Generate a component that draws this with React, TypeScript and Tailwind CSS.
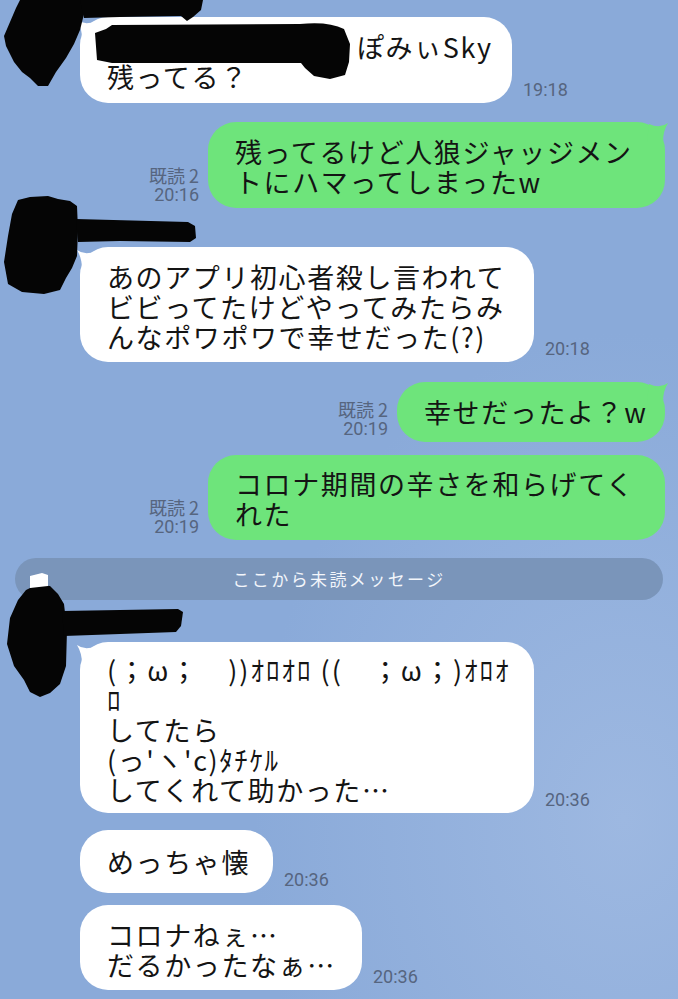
import React from "react";

const TEXT = "text-[27px] tracking-[1.6px] text-[#141414] whitespace-nowrap";
const TIME = "font-['Roboto',sans-serif] text-[18px] leading-[20px] text-[#56657f] pb-[3px]";

function Tail({ side, color }: { side: "left" | "right"; color: string }) {
  if (side === "left") {
    return (
      <svg className="absolute left-[-4px] top-0" width="24" height="24" viewBox="0 0 24 24">
        <path d="M1 3 Q9 9 20 4 L22 22 L6 22 Q6 11 1 3 Z" fill={color} />
      </svg>
    );
  }
  return (
    <svg className="absolute right-[-4px] top-[-2px]" width="24" height="24" viewBox="0 0 24 24">
      <path d="M23 3 Q15 9 4 4 L2 22 L18 22 Q18 11 23 3 Z" fill={color} />
    </svg>
  );
}

function Left({
  box,
  time,
  tail,
  children,
}: {
  box: string;
  time: string;
  tail?: boolean;
  children: React.ReactNode;
}) {
  return (
    <div className="flex items-end gap-[11px] pl-[80px]">
      <div className={"relative rounded-[28px] bg-white pl-[27px] " + box}>
        {tail && <Tail side="left" color="#ffffff" />}
        <div className={"relative " + TEXT}>{children}</div>
      </div>
      <span className={TIME}>{time}</span>
    </div>
  );
}

function Right({
  box,
  time,
  tail,
  children,
}: {
  box: string;
  time: string;
  tail?: boolean;
  children: React.ReactNode;
}) {
  return (
    <div className="flex items-end justify-end gap-[9px] pr-[13px]">
      <div className="flex flex-col items-end pb-[3px] leading-[20px] text-[#56657f]">
        <span className="text-[18px] whitespace-pre">既読 2</span>
        <span className="font-['Roboto',sans-serif] text-[18px]">{time}</span>
      </div>
      <div className={"relative rounded-[28px] bg-[#6ee47b] pl-[27px] " + box}>
        {tail && <Tail side="right" color="#6ee47b" />}
        <div className={"relative " + TEXT}>{children}</div>
      </div>
    </div>
  );
}

export default function App() {
  return (
    <div className="relative h-[999px] w-[678px] overflow-hidden bg-[#8aaad9] bg-[radial-gradient(ellipse_at_92%_82%,#9db8e1_0%,#8aaad9_42%)] font-['Noto_Sans_CJK_JP',sans-serif]">
      <div className="flex flex-col pt-[17px]">
        {/* first message, name redacted */}
        <Left box="w-[432px] pt-[15px] pb-[11px] leading-[30px]" time="19:18" tail>
          <div>
            <span className="inline-block w-[250px]" />
            ぽみぃSky
          </div>
          <div>残ってる？</div>
        </Left>

        <div className="mt-[19px]">
          <Right box="w-[457px] pt-[15px] pb-[11px] leading-[30px]" time="20:16" tail>
            <div>残ってるけど人狼ジャッジメン</div>
            <div>トにハマってしまったw</div>
          </Right>
        </div>

        <div className="mt-[39px]">
          <Left box="w-[454px] pt-[15px] pb-[10px] leading-[30px]" time="20:18" tail>
            <div>あのアプリ初心者殺し言われて</div>
            <div>ビビってたけどやってみたらみ</div>
            <div>んなポワポワで幸せだった(?)</div>
          </Left>
        </div>

        <div className="mt-[20px]">
          <Right box="w-[268px] py-[15px] leading-[30px]" time="20:19" tail>
            <div>幸せだったよ？w</div>
          </Right>
        </div>

        <div className="mt-[13px]">
          <Right box="w-[457px] pt-[14px] pb-[11px] leading-[30px]" time="20:19">
            <div>コロナ期間の辛さを和らげてく</div>
            <div>れた</div>
          </Right>
        </div>

        {/* unread divider */}
        <div className="mx-[15px] mt-[18px] flex h-[42px] items-center justify-center rounded-full bg-[#7a95ba]">
          <span className="text-[17px] tracking-[2.4px] text-[#f3f6fb]">ここから未読メッセージ</span>
        </div>

        <div className="mt-[42px]">
          <Left box="w-[454px] pt-[13px] pb-[8px] leading-[30px]" time="20:36" tail>
            <div className="tracking-[2px]">(；ω；　))ｵﾛｵﾛ ((　；ω；)ｵﾛｵ</div>
            <div>ﾛ</div>
            <div>してたら</div>
            <div>(っ'ヽ'c)ﾀﾁｹﾙ</div>
            <div>してくれて助かった…</div>
          </Left>
        </div>

        <div className="mt-[17px]">
          <Left box="w-[193px] py-[16px] leading-[31px]" time="20:36">
            <div>めっちゃ懐</div>
          </Left>
        </div>

        <div className="mt-[12px]">
          <Left box="w-[282px] pt-[15px] pb-[10px] leading-[30px]" time="20:36">
            <div>コロナねぇ…</div>
            <div>だるかったなぁ…</div>
          </Left>
        </div>
      </div>

      {/* redaction scribbles over avatars and names */}
      <svg className="pointer-events-none absolute inset-0" width="678" height="999" viewBox="0 0 678 999">
        <g fill="#050505">
          <path d="M20 0 L86 0 L84 14 L80 30 L74 44 L66 58 L56 72 L48 86 L38 86 L30 78 L22 72 L14 62 L6 46 L4 36 L10 22 L16 8 Z" />
          <path d="M80 0 L203 0 L201 10 L193 17 L187 21 L181 16 L120 17 L84 18 Z" />
          <path d="M95 33 L106 29 L112 25 L300 24 Q328 21 344 29 L350 44 L349 62 L345 75 L330 79 L314 76 L305 68 L301 63 L112 63 L97 60 Z" />
          <path d="M18 200 L30 197 L48 196 L58 199 L70 201 L77 206 L78 230 L77 256 L72 268 L66 278 L60 290 L44 294 L22 292 L8 284 L4 262 L8 236 L12 214 Z" />
          <path d="M76 219 L188 222 L195 226 L196 238 L190 242 L120 241 L78 242 Z" />
          <path d="M26 590 L36 585 L50 586 L58 594 L64 604 L67 630 L66 666 L60 684 L50 693 L40 697 L30 692 L24 680 L14 666 L7 644 L10 618 L18 600 Z" />
          <path d="M62 611 L178 609 L183 612 L181 626 L176 632 L120 634 L64 636 Z" />
        </g>
        <path d="M30 576 L42 573 L48 575 L48 586 L30 588 Z" fill="#ffffff" />
      </svg>
    </div>
  );
}
